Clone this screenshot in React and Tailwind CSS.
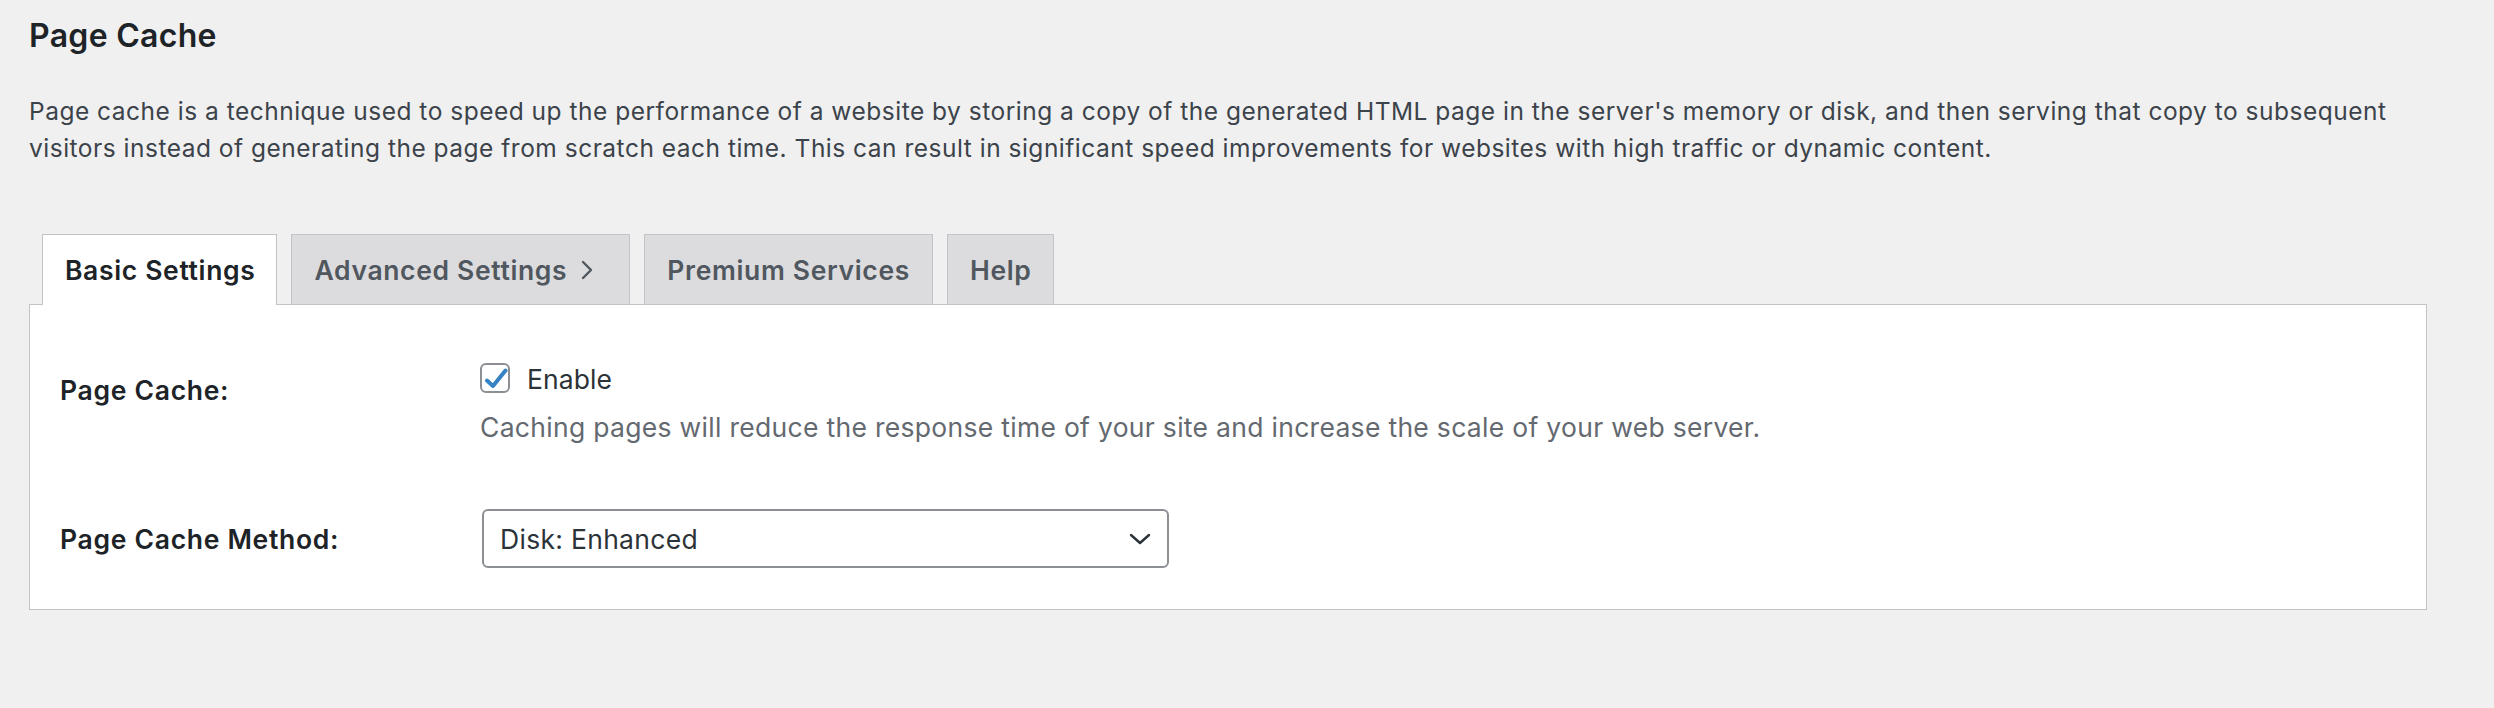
import React from 'react';

const tabs = [
  { label: 'Basic Settings', active: true },
  { label: 'Advanced Settings', chevron: true },
  { label: 'Premium Services' },
  { label: 'Help' },
];

function Tab({ label, active, chevron }) {
  return (
    <div
      className={
        active
          ? 'relative z-10 -mb-px flex h-[71px] items-center border-x border-t border-[#c3c4c7] bg-white pl-[22px] pr-[21px] text-[#1d2327]'
          : 'flex h-[70px] items-center border-x border-t border-[#c3c4c7] bg-[#dcdcde] pl-[22px] pr-[22px] text-[#50575e]'
      }
    >
      <span className="text-[26.5px] font-semibold leading-[40px] tracking-[0.65px]">{label}</span>
      {chevron && (
        <svg className="ml-[14px] mr-[14px]" width="12" height="20" viewBox="0 0 12 20" fill="none">
          <polyline points="2,2 10,10 2,18" stroke="#50575e" strokeWidth="2.4" strokeLinecap="round" strokeLinejoin="round" />
        </svg>
      )}
    </div>
  );
}

export default function App() {
  return (
    <div className="min-h-[708px] w-full bg-[#f0f0f1] pl-[29px] pr-[67px] pt-[16px] font-['Inter',sans-serif]">
      {/* Header */}
      <h1 className="text-[32px] font-semibold leading-[40px] tracking-[0.3px] text-[#1d2327]">Page Cache</h1>
      <p className="mt-[37px] text-[24.5px] leading-[37px] tracking-[0.5px] text-[#3c434a]">
        <span className="block whitespace-nowrap">
          Page cache is a technique used to speed up the performance of a website by storing a copy of the generated HTML page in the server's memory or disk, and then serving that copy to subsequent
        </span>
        <span className="block whitespace-nowrap">
          visitors instead of generating the page from scratch each time. This can result in significant speed improvements for websites with high traffic or dynamic content.
        </span>
      </p>

      {/* Tabs */}
      <div className="mt-[67px] flex items-end gap-[14px] pl-[13px]">
        {tabs.map((tab) => (
          <Tab key={tab.label} {...tab} />
        ))}
      </div>

      {/* Panel */}
      <div className="border border-[#c3c4c7] bg-white px-[30px] pb-[41px] pt-[58px]">
        <div className="flex">
          <div className="w-[420px] pt-[7px] text-[26.5px] font-semibold leading-[40px] tracking-[0.7px] text-[#1d2327]">Page Cache:</div>
          <div>
            <div className="flex h-[30px] items-center">
              <div className="flex h-[30px] w-[30px] items-center justify-center rounded-[6px] border-2 border-[#8c8f94] bg-white">
                <svg width="26" height="26" viewBox="0 0 26 26" fill="none">
                  <polyline points="5,15.5 11,21 23.5,5.5" stroke="#3582c4" strokeWidth="4" strokeLinecap="round" strokeLinejoin="round" />
                </svg>
              </div>
              <span className="ml-[17px] mt-[2px] text-[26.5px] leading-[40px] tracking-[0.1px] text-[#2c3338]">Enable</span>
            </div>
            <p className="mt-[14px] text-[26.5px] leading-[40px] tracking-[0.3px] text-[#646970]">
              Caching pages will reduce the response time of your site and increase the scale of your web server.
            </p>
          </div>
        </div>

        <div className="mt-[62px] flex items-center">
          <div className="w-[420px] text-[26.5px] font-semibold leading-[40px] tracking-[0.7px] text-[#1d2327]">Page Cache Method:</div>
          <div className="ml-[2px] flex h-[59px] w-[687px] items-center justify-between rounded-[6px] border-2 border-[#8c8f94] bg-white pl-[16px] pr-[16px]">
            <span className="text-[26.5px] leading-[40px] tracking-[0.3px] text-[#2c3338]">Disk: Enhanced</span>
            <svg width="22" height="12" viewBox="0 0 22 12" fill="none">
              <polyline points="2,2 11,10 20,2" stroke="#2c3338" strokeWidth="2.4" strokeLinecap="round" strokeLinejoin="round" />
            </svg>
          </div>
        </div>
      </div>
    </div>
  );
}
